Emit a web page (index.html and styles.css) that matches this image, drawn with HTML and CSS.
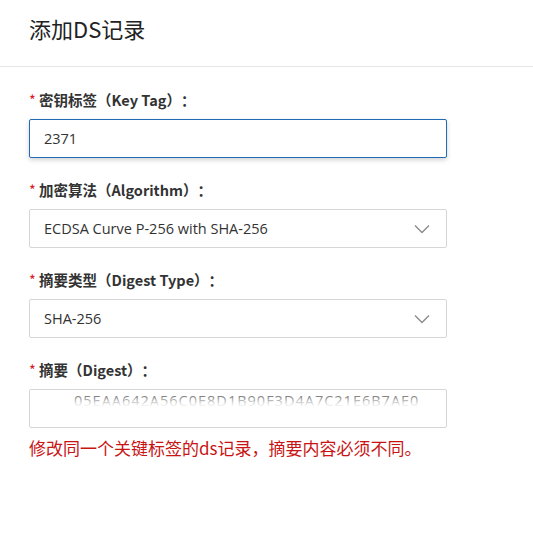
FILE: index.html
```html
<!DOCTYPE html>
<html lang="zh-CN">
<head>
    <meta charset="UTF-8">
    <title>添加DS记录</title>
    <link rel="stylesheet" href="styles.css">
</head>
<body>
    <div class="dialog">
        <div class="dialog-header">
            <h2>添加DS记录</h2>
        </div>
        <form class="dialog-body">
            <div class="form-item">
                <label><span class="req">*</span> 密钥标签（Key Tag）：</label>
                <input class="field focused" type="text" value="2371">
            </div>
            <div class="form-item">
                <label><span class="req">*</span> 加密算法（Algorithm）：</label>
                <div class="field select">
                    <span>ECDSA Curve P-256 with SHA-256</span>
                    <svg width="16" height="10" viewBox="0 0 16 10"><path d="M1 1.5l7 7 7-7" fill="none" stroke="#8a8a8a" stroke-width="1.3"/></svg>
                </div>
            </div>
            <div class="form-item">
                <label><span class="req">*</span> 摘要类型（Digest Type）：</label>
                <div class="field select">
                    <span>SHA-256</span>
                    <svg width="16" height="10" viewBox="0 0 16 10"><path d="M1 1.5l7 7 7-7" fill="none" stroke="#8a8a8a" stroke-width="1.3"/></svg>
                </div>
            </div>
            <div class="form-item">
                <label><span class="req">*</span> 摘要（Digest）：</label>
                <div class="field digest">
                    <span class="digest-text">05EAA642A56C0E8D1B90F3D4A7C21E6B7AE0</span>
                    <span class="smudge"></span>
                </div>
                <p class="error">修改同一个关键标签的ds记录，摘要内容必须不同。</p>
            </div>
        </form>
    </div>
</body>
</html>
```

FILE: styles.css
```css
body {
    margin: 0;
    background: #fff;
    font-family: "Noto Sans CJK SC", "Open Sans", sans-serif;
    color: #333;
}
.dialog {
    width: 533px;
}
.dialog-header {
    height: 67px;
    border-bottom: 1px solid #e6e6e6;
    padding-left: 29px;
    box-sizing: border-box;
}
.dialog-header h2 {
    margin: 0;
    padding-top: 12px;
    font-size: 22px;
    font-weight: normal;
    color: #222;
    line-height: 32px;
}
.dialog-body {
    padding: 22px 87px 0 29px;
}
.form-item {
    margin-bottom: 21px;
}
label {
    display: block;
    font-size: 14.5px;
    font-weight: bold;
    color: #333;
    line-height: 22px;
    margin-bottom: 8px;
    text-spacing-trim: space-all;
}
.req {
    color: #d9201e;
    font-weight: normal;
}
.field {
    display: flex;
    align-items: center;
    width: 418px;
    height: 39px;
    box-sizing: border-box;
    border: 1px solid #d6d6d6;
    border-radius: 2px;
    padding: 0 14px;
    font-family: "Open Sans", "Noto Sans CJK SC", sans-serif;
    font-size: 14.5px;
    color: #333;
    background: #fff;
}
input.field {
    outline: none;
}
.focused {
    border-color: #1f6bb5;
    box-shadow: 0 2px 5px rgba(0, 0, 0, 0.18);
}
.select {
    justify-content: space-between;
}
.select svg {
    margin-right: 2px;
}
.digest {
    position: relative;
    overflow: hidden;
}
.digest-text {
    padding-left: 30px;
    white-space: nowrap;
    letter-spacing: 1px;
    color: #666;
    transform: translateY(-8px);
}
.smudge {
    position: absolute;
    left: 24px;
    right: 10px;
    top: 10px;
    height: 24px;
    background: #fff;
    filter: blur(4px);
}
.error {
    margin: 8px 0 0;
    font-size: 17px;
    color: #c81414;
    line-height: 24px;
    text-spacing-trim: space-all;
}
```
